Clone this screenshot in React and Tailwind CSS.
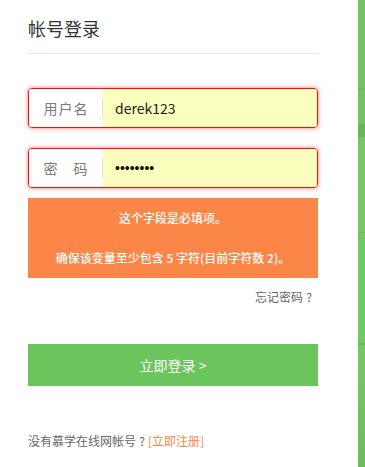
export default function App() {
  const font = { fontFamily: '"Noto Sans CJK SC", "Noto Sans", sans-serif' };
  return (
    <div className="flex w-[365px] h-[467px] bg-white overflow-hidden" style={font}>
      <div className="w-[358px] pl-[28px] pr-[40px] flex flex-col">
        <div className="pt-[16px] pb-[13px] border-b border-[#e8e8e8]">
          <h1 className="text-[18px] leading-[24px] text-[#333] font-normal">帐号登录</h1>
        </div>

        <div className="mt-[34px] h-[40px] flex items-center rounded-[4px] border border-[#ee1111] shadow-[0_0_4px_rgba(255,0,0,0.6)] overflow-hidden">
          <div className="w-[73px] h-full bg-white flex items-center justify-center">
            <div className="w-[44px] flex justify-between text-[14px] leading-[20px] text-[#7a7a7a]">
              <span>用</span><span>户</span><span>名</span>
            </div>
          </div>
          <div className="w-px h-[20px] bg-[#e4e4e4]" />
          <div className="flex-1 h-full bg-[#faffbd] flex items-center pl-[12px] text-[14px] text-[#222]">derek123</div>
        </div>

        <div className="mt-[20px] h-[40px] flex items-center rounded-[4px] border border-[#ee1111] shadow-[0_0_4px_rgba(255,0,0,0.6)] overflow-hidden">
          <div className="w-[73px] h-full bg-white flex items-center justify-center">
            <div className="w-[44px] flex justify-between text-[14px] leading-[20px] text-[#7a7a7a]">
              <span>密</span><span>码</span>
            </div>
          </div>
          <div className="w-px h-[20px] bg-[#e4e4e4]" />
          <div className="flex-1 h-full bg-[#faffbd] flex items-center pl-[12px] text-[14px] text-[#111]" style={{ fontFamily: '"Liberation Sans", sans-serif' }}>••••••••</div>
        </div>

        <div className="mt-[10px] h-[80px] bg-[#fb8648] text-white text-[12px] leading-[20px] font-medium flex flex-col items-center py-[10px] gap-[20px]">
          <p>这个字段是必填项。</p>
          <p>确保该变量至少包含 5 字符(目前字符数 2)。</p>
        </div>

        <div className="mt-[9px] text-right pr-[3px] text-[12px] leading-[20px] text-[#666]">
          忘记密码<span className="inline-block w-[12px] text-center">?</span>
        </div>

        <button className="mt-[37px] h-[42px] bg-[#6cc55c] text-white text-[14px] flex items-center justify-center">立即登录 &gt;</button>

        <div className="mt-[45px] text-[12px] leading-[20px] text-[#666]">
          没有慕学在线网帐号<span className="inline-block w-[12px] text-center">?</span><span className="text-[#fb8648]">[立即注册]</span>
        </div>
      </div>
      <div className="w-[7px] h-[467px] flex flex-col bg-[#70c562]">
        <div className="h-[88px]" />
        <div className="h-[2px] bg-[#69bd5b]" />
        <div className="h-[34px]" />
        <div className="h-[13px] bg-[#65b956]" />
        <div className="h-[95px] bg-[#74c966]" />
        <div className="h-px bg-[#6bbf5d]" />
        <div className="h-[110px] bg-[#72c864]" />
        <div className="h-[2px] bg-[#66ba58]" />
        <div className="flex-1 bg-gradient-to-b from-[#74c966] to-[#6abd5b]" />
      </div>
    </div>
  );
}
